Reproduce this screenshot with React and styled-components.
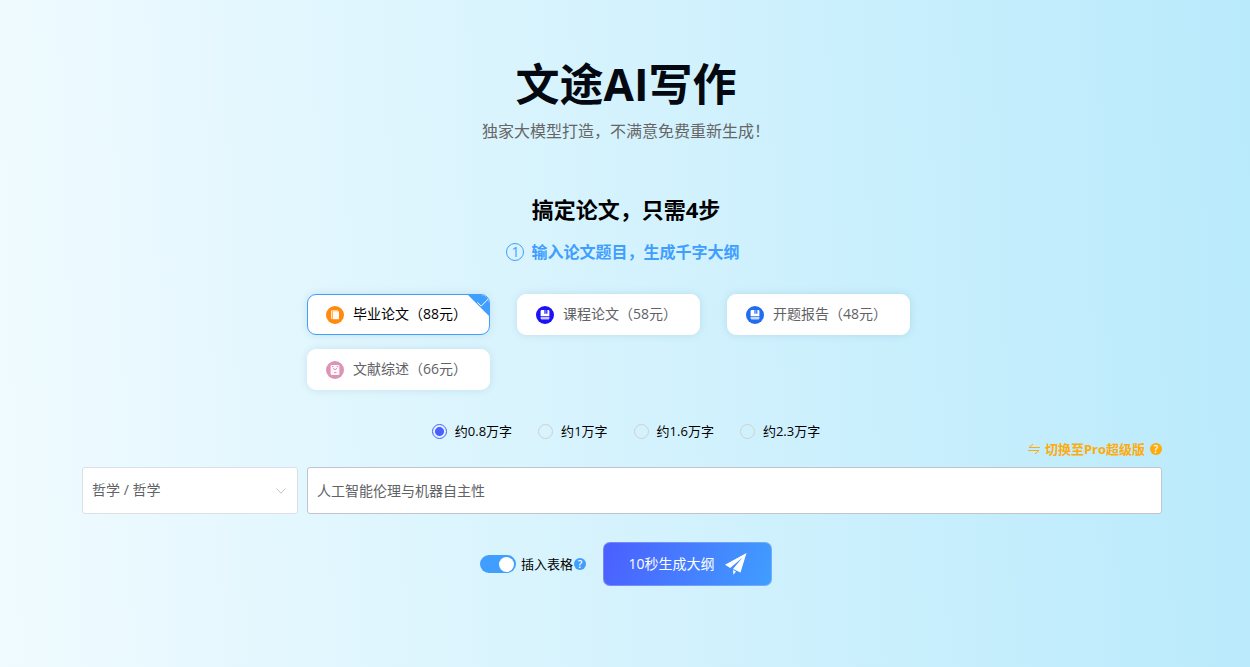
import { useState } from "react"
import styled, { createGlobalStyle, css } from "styled-components"

const paperTypes = [
  { id: "graduate", name: "毕业论文", price: 88, color: "#ff8a0c", icon: "copy" },
  { id: "course", name: "课程论文", price: 58, color: "#1c12f5", icon: "book" },
  { id: "proposal", name: "开题报告", price: 48, color: "#226cf0", icon: "book" },
  { id: "review", name: "文献综述", price: 66, color: "#dc94b6", icon: "review" },
]

const wordCounts = ["0.8", "1", "1.6", "2.3"]

function TypeIcon({ icon, color }) {
  return (
    <svg width="18" height="18" viewBox="0 0 18 18" aria-hidden="true">
      <circle cx="9" cy="9" r="9" fill={color} />
      {icon === "copy" && (
        <>
          <path d="M5 5.2q0-1 1-1h6v1H6.3v8H6q-1 0-1-1z" fill="#fff" opacity="0.75" />
          <rect x="6.8" y="5.2" width="6.2" height="8" rx="0.6" fill="#fff" opacity="0.95" />
        </>
      )}
      {icon === "book" && (
        <>
          <path d="M4.6 5q0-1 1-1h2.8v3.8h1.2V4h.6v3.8h1.2V4h1q1 0 1 1v5.2H4.6z" fill="#fff" />
          <path d="M4.6 11h8.8v1.6q0 .8-.8.8h-7q-1 0-1-.8z" fill="#fff" opacity="0.75" />
        </>
      )}
      {icon === "review" && (
        <>
          <rect x="4.6" y="4" width="8.8" height="10" rx="1" fill="#fff" opacity="0.9" />
          <path d="M6 5.6h1.4M10.8 5.6h1.4M7 7.2l2 1.6 2-1.6M8 11.5h2.4" stroke={color} fill="none" />
        </>
      )}
    </svg>
  )
}

function App() {
  const [type, setType] = useState("graduate")
  const [words, setWords] = useState("0.8")
  const [title, setTitle] = useState("人工智能伦理与机器自主性")
  const [withTable, setWithTable] = useState(true)

  return (
    <>
      <GlobalStyle />
      <Page>
        <Title>文途AI写作</Title>
        <SubTitle>独家大模型打造，不满意免费重新生成！</SubTitle>
        <Heading>搞定论文，只需4步</Heading>
        <Step>
          <StepNumber>1</StepNumber>
          输入论文题目，生成千字大纲
        </Step>

        <TypeGrid>
          {paperTypes.map(item => (
            <TypeCard
              key={item.id}
              type="button"
              $active={type === item.id}
              aria-pressed={type === item.id}
              onClick={() => setType(item.id)}
            >
              <TypeIcon icon={item.icon} color={item.color} />
              <TypeName>
                {item.name}（{item.price}元）
              </TypeName>
              {type === item.id && (
                <Corner viewBox="0 0 22 22" aria-hidden="true">
                  <path d="M0 0h22v22z" fill="#409eff" />
                  <path d="M10 8l3.6 3.6L20.5 4.5" fill="none" stroke="#fff" strokeWidth="0.9" />
                </Corner>
              )}
            </TypeCard>
          ))}
        </TypeGrid>

        <WordList>
          {wordCounts.map(count => (
            <RadioLabel key={count}>
              <Radio
                type="radio"
                name="words"
                value={count}
                checked={words === count}
                onChange={() => setWords(count)}
              />
              约{count}万字
            </RadioLabel>
          ))}
        </WordList>

        <Form>
          <ProLink href="#pro">
            <svg width="12" height="12" viewBox="0 0 12 12" fill="none" stroke="currentColor" aria-hidden="true">
              <path d="M5 1L1 4.5h11M0 7.5h11L7 11" />
            </svg>
            切换至Pro超级版
            <Help $color="#ffab0a">?</Help>
          </ProLink>
          <SelectBox>
            <Select aria-label="专业" defaultValue="philosophy">
              <option value="philosophy">哲学 / 哲学</option>
            </Select>
            <svg width="10" height="6" viewBox="0 0 10 6" fill="none" stroke="#c0c4cc" aria-hidden="true">
              <path d="M0.5 0.5L5 5.2 9.5 0.5" />
            </svg>
          </SelectBox>
          <TitleInput aria-label="论文题目" value={title} onChange={e => setTitle(e.target.value)} />
        </Form>

        <Actions>
          <SwitchLabel>
            <Switch
              type="checkbox"
              role="switch"
              checked={withTable}
              onChange={e => setWithTable(e.target.checked)}
            />
            <SwitchText>
              插入表格
              <Help $color="#409eff">?</Help>
            </SwitchText>
          </SwitchLabel>
          <Submit type="button">
            10秒生成大纲
            <svg width="22" height="22" viewBox="0 0 22 22" fill="#fff" aria-hidden="true">
              <path d="M21.5 0L0 11.8l5.2 3.1L17.6 4.6 8 16l7.5 3.6z" />
              <path d="M8 17l3 1.5-2.6 3.2z" />
            </svg>
          </Submit>
        </Actions>
      </Page>
    </>
  )
}

export default App

const GlobalStyle = createGlobalStyle`
  * {
    box-sizing: border-box;
  }

  body {
    margin: 0;
    font-family: "Open Sans", "Noto Sans CJK SC", sans-serif;
    color: #000;
  }

  button,
  input,
  select {
    margin: 0;
    font-family: inherit;
  }

  svg {
    flex: none;
  }
`

const Page = styled.main`
  display: flex;
  flex-direction: column;
  align-items: center;
  min-height: 100vh;
  padding: 56px 0 56px 2px;

  background: linear-gradient(88deg, #f0fbff, #d6f3fd 47%, #b9eafc);
`

const Title = styled.h1`
  margin: 0;
  font-size: 44px;
  line-height: 56px;
  color: #030811;
`

const SubTitle = styled.p`
  margin: 9px 0 0;
  font-size: 16px;
  line-height: 20px;
  color: #666;
`

const Heading = styled.h2`
  margin: 53px 0 0;
  font-size: 22px;
  line-height: 30px;
`

const Step = styled.div`
  display: flex;
  align-items: center;
  gap: 7px;
  margin-top: 18px;
  padding-right: 6px;
  font-size: 16px;
  font-weight: 700;
  line-height: 20px;
  color: #409eff;
`

const StepNumber = styled.span`
  width: 18px;
  height: 18px;
  border: 1px solid #409eff;
  border-radius: 50%;

  font-size: 14px;
  font-weight: 400;
  line-height: 16px;
  text-align: center;
`

const TypeGrid = styled.div`
  display: grid;
  grid-template-columns: repeat(auto-fill, 183px);
  gap: 14px 27px;
  width: 100%;
  max-width: 638px;
  margin-top: 32px;
`

const TypeCard = styled.button`
  position: relative;
  display: flex;
  align-items: center;
  gap: 9px;
  height: 41px;
  padding: 0 18px;
  overflow: hidden;

  background: #fff;
  border: 1px solid #fff;
  border-radius: 9px;
  box-shadow: 0 0 9px rgba(0, 80, 120, 0.12);
  font-size: 14px;
  line-height: 20px;
  color: #606266;
  white-space: nowrap;
  cursor: pointer;

  ${props =>
    props.$active &&
    css`
      border-color: #409eff;
      color: #000;
    `}
`

const TypeName = styled.span`
  padding-bottom: 2px;
`

const Corner = styled.svg`
  position: absolute;
  top: -1px;
  right: -1px;
  width: 23px;
  height: 23px;
`

const WordList = styled.div`
  display: flex;
  gap: 26px;
  margin-top: 31px;
`

const RadioLabel = styled.label`
  display: flex;
  align-items: center;
  gap: 8px;
  font-size: 13px;
  line-height: 20px;
`

const Radio = styled.input`
  appearance: none;
  width: 15px;
  height: 15px;
  border: 1px solid #d0d0d0;
  border-radius: 50%;

  &:checked {
    border-color: #4b5eff;
    background: radial-gradient(circle, #4b5eff 4px, transparent 5px);
  }
`

const Form = styled.div`
  display: grid;
  grid-template-columns: 216px 1fr;
  column-gap: 9px;
  width: 100%;
  padding: 0 88px 0 80px;
`

const ProLink = styled.a`
  display: flex;
  align-items: center;
  gap: 5px;
  grid-column: 1 / -1;
  justify-self: end;
  margin-bottom: 10px;

  font-size: 13px;
  font-weight: 700;
  line-height: 16px;
  color: #ffab0a;
  text-decoration: none;
`

const Help = styled.span`
  width: 12px;
  height: 12px;
  border-radius: 50%;

  background: ${props => props.$color};
  font-size: 10px;
  font-weight: 600;
  line-height: 12px;
  text-align: center;
  color: #fff;
`

const SelectBox = styled.div`
  display: grid;
  align-items: center;

  > * {
    grid-area: 1 / 1;
  }

  svg {
    justify-self: end;
    margin-right: 12px;
    pointer-events: none;
  }
`

const field = css`
  width: 100%;
  height: 47px;
  padding: 0 9px 2px;

  background: #fff;
  border-radius: 3px;
  font-size: 14px;
  color: #606266;
`

const Select = styled.select`
  ${field}
  appearance: none;
  border: 1px solid #dcdfe6;
`

const TitleInput = styled.input`
  ${field}
  border: 1px solid #c0c4cc;
`

const Actions = styled.div`
  display: flex;
  align-items: center;
  gap: 17px;
  margin-top: 28px;
`

const SwitchLabel = styled.label`
  display: flex;
  align-items: center;
  gap: 5px;
  font-size: 13px;
  line-height: 20px;
`

const SwitchText = styled.span`
  display: flex;
  align-items: center;
  gap: 1px;
`

const Switch = styled.input`
  appearance: none;
  display: flex;
  align-items: center;
  width: 36px;
  height: 18px;
  padding: 0 2px;
  border-radius: 9px;
  background: #dcdfe6;

  &::before {
    content: "";
    width: 15px;
    height: 15px;
    border-radius: 50%;
    background: #fff;
  }

  &:checked {
    justify-content: flex-end;
    background: #409eff;
  }
`

const Submit = styled.button`
  display: flex;
  align-items: center;
  justify-content: center;
  gap: 10px;
  width: 169px;
  height: 44px;
  padding: 0;

  background: linear-gradient(110deg, #4b5eff, #409eff) border-box;
  border: 1px solid rgba(220, 223, 230, 0.3);
  border-radius: 7px;
  font-size: 14px;
  line-height: 20px;
  color: #fff;
  cursor: pointer;
`
